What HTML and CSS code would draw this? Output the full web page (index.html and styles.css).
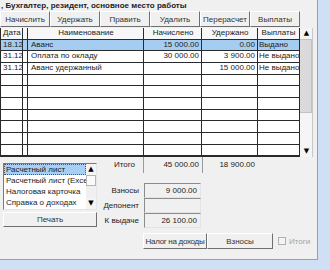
FILE: index.html
```html
<!DOCTYPE html>
<html lang="ru">

<head>
    <meta charset="UTF-8">
    <meta name="viewport" content="width=device-width, initial-scale=1.0">
    <title>Расчетный лист</title>
    <link rel="stylesheet" href="styles.css">
</head>

<body>
    <div class="window">
        <div class="caption">, Бухгалтер, резидент, основное место работы</div>

        <div class="toolbar">
            <button class="btn">Начислить</button>
            <button class="btn">Удержать</button>
            <button class="btn">Править</button>
            <button class="btn">Удалить</button>
            <button class="btn">Перерасчет</button>
            <button class="btn">Выплаты</button>
        </div>

        <div class="grid-wrap">
            <div class="grid">
                <div class="row head">
                    <div class="c c-date">Дата</div>
                    <div class="c"></div>
                    <div class="c c-center">Наименование</div>
                    <div class="c c-center">Начислено</div>
                    <div class="c c-center">Удержано</div>
                    <div class="c c-center">Выплаты</div>
                </div>
                <div class="row selected">
                    <div class="c">18.12</div>
                    <div class="c"></div>
                    <div class="c c-name">Аванс</div>
                    <div class="c c-num">15 000.00</div>
                    <div class="c c-num">0.00</div>
                    <div class="c">Выдано</div>
                </div>
                <div class="row">
                    <div class="c">31.12</div>
                    <div class="c"></div>
                    <div class="c c-name">Оплата по окладу</div>
                    <div class="c c-num">30 000.00</div>
                    <div class="c c-num">3 900.00</div>
                    <div class="c">Не выдано</div>
                </div>
                <div class="row">
                    <div class="c">31.12</div>
                    <div class="c"></div>
                    <div class="c c-name">Аванс удержанный</div>
                    <div class="c c-num"></div>
                    <div class="c c-num">15 000.00</div>
                    <div class="c">Не выдано</div>
                </div>
                <!-- empty rows -->
                <div class="row"><div class="c"></div><div class="c"></div><div class="c"></div><div class="c"></div><div class="c"></div><div class="c"></div></div>
                <div class="row"><div class="c"></div><div class="c"></div><div class="c"></div><div class="c"></div><div class="c"></div><div class="c"></div></div>
                <div class="row"><div class="c"></div><div class="c"></div><div class="c"></div><div class="c"></div><div class="c"></div><div class="c"></div></div>
                <div class="row"><div class="c"></div><div class="c"></div><div class="c"></div><div class="c"></div><div class="c"></div><div class="c"></div></div>
                <div class="row"><div class="c"></div><div class="c"></div><div class="c"></div><div class="c"></div><div class="c"></div><div class="c"></div></div>
                <div class="row"><div class="c"></div><div class="c"></div><div class="c"></div><div class="c"></div><div class="c"></div><div class="c"></div></div>
                <div class="row"><div class="c"></div><div class="c"></div><div class="c"></div><div class="c"></div><div class="c"></div><div class="c"></div></div>
            </div>
            <div class="vscroll">
                <div class="sb-btn">▲</div>
                <div class="sb-thumb"></div>
                <div class="sb-btn sb-last">▼</div>
            </div>
        </div>

        <div class="lower">
            <div class="left-col">
                <div class="listbox">
                    <ul class="list-items">
                        <li class="active">Расчетный лист</li>
                        <li>Расчетный лист (Excel)</li>
                        <li>Налоговая карточка</li>
                        <li>Справка о доходах</li>
                    </ul>
                    <div class="list-scroll">
                        <div class="ls-btn">▲</div>
                        <div class="ls-thumb"></div>
                        <div class="ls-track"></div>
                        <div class="ls-btn">▼</div>
                    </div>
                </div>
                <button class="btn print">Печать</button>
            </div>

            <div class="right-col">
                <div class="totals">
                    <div class="lbl total-lbl">Итого</div>
                    <div class="total-cell sum1">45 000.00</div>
                    <div class="total-cell sum2">18 900.00</div>
                </div>

                <div class="fields">
                    <div class="field-row">
                        <div class="lbl">Взносы</div>
                        <div class="field">9 000.00</div>
                    </div>
                    <div class="field-row">
                        <div class="lbl">Депонент</div>
                        <div class="field"></div>
                    </div>
                    <div class="field-row">
                        <div class="lbl">К выдаче</div>
                        <div class="field">26 100.00</div>
                    </div>
                </div>

                <div class="actions">
                    <button class="btn tax">Налог на доходы</button>
                    <button class="btn fees">Взносы</button>
                    <label class="check"><span class="box"></span>Итоги</label>
                </div>
            </div>
        </div>
    </div>
</body>

</html>
```

FILE: styles.css
```css
body {
    margin: 0;
    background: #cfe0f4;
    font-family: 'Liberation Sans', Arial, sans-serif;
    font-size: 8px;
    color: #1c1c1c;
}

.window {
    width: 318px;
    height: 260px;
    box-sizing: border-box;
    background: #f0f0f0;
    border-right: 1px solid #8ba3bf;
    border-bottom: 1px solid #8ba3bf;
    overflow: hidden;
}

.caption {
    height: 11px;
    line-height: 11px;
    font-weight: bold;
    white-space: nowrap;
    padding-left: 1px;
}

.toolbar {
    display: flex;
    height: 16px;
    margin-bottom: 1px;
}

.btn {
    width: 50px;
    height: 16px;
    padding: 0;
    border: 1px solid;
    border-color: #ffffff #6f6f6f #6f6f6f #ffffff;
    background: #f0f0f0;
    font: inherit;
    color: #333;
    white-space: nowrap;
    overflow: hidden;
}

/* grid */
.grid-wrap {
    display: flex;
    align-items: stretch;
}

.grid {
    width: 300px;
    flex-shrink: 0;
    box-sizing: border-box;
    border-left: 1px solid #2a2a2a;
    border-bottom: 1px solid #2a2a2a;
    background: #fff;
}

.row {
    display: grid;
    grid-template-columns: 22px 5px 116px 58px 56px 42px;
    height: 11.67px;
    box-sizing: border-box;
    border-bottom: 1px solid #2a2a2a;
}

.row.head {
    height: 11.7px;
    background: #f7f7f7;
}

.row.selected {
    background: #a5cdf2;
}

.c {
    border-right: 1px solid #2a2a2a;
    line-height: 10px;
    padding: 0 1px 0 2px;
    white-space: nowrap;
    overflow: hidden;
}

.c:last-child {
    padding-left: 1px;
}

.c-center {
    text-align: center;
}

.c-name {
    padding-left: 3px;
}

.c-num {
    text-align: right;
    padding-right: 2px;
}

.vscroll {
    width: 12px;
    flex-shrink: 0;
    display: flex;
    flex-direction: column;
    background: #f5f5f5;
    border-right: 1px solid #c8c8c8;
}

.sb-btn,
.ls-btn {
    height: 11px;
    flex-shrink: 0;
    text-align: center;
    font-family: 'DejaVu Sans', sans-serif;
    font-size: 7px;
    line-height: 11px;
    color: #000;
    background: #f4f4f4;
}

.sb-btn {
    padding-left: 1px;
}

.sb-last {
    margin-top: auto;
}

.sb-thumb {
    height: 74px;
    flex-shrink: 0;
    box-sizing: border-box;
    background: #dadada;
    border: 1px solid #c2c2c2;
    border-left: 0;
}

/* lower part */
.lower {
    display: flex;
}

.left-col {
    width: 94px;
    margin-left: 3px;
    padding-top: 6px;
}

.listbox {
    display: flex;
    height: 47px;
    box-sizing: border-box;
    border: 1px solid;
    border-color: #7a7a7a #e6e6e6 #e6e6e6 #7a7a7a;
    background: #fff;
}

.list-items {
    flex: 1;
    margin: 0;
    padding: 0;
    list-style: none;
    overflow: hidden;
}

.list-items li {
    height: 11px;
    line-height: 11px;
    padding-left: 2px;
    white-space: nowrap;
    box-sizing: border-box;
}

.list-items li.active {
    background: #a8cff3;
    outline: 1px dotted #555;
    outline-offset: -1px;
}

.list-scroll {
    width: 10px;
    flex-shrink: 0;
    display: flex;
    flex-direction: column;
    background: #f0f0f0;
}

.ls-thumb {
    height: 11px;
    flex-shrink: 0;
    box-sizing: border-box;
    border: 1px solid #b5b5b5;
    background: #fafafa;
}

.ls-track {
    flex: 1;
}

.print {
    width: 94px;
    height: 15px;
    margin-top: 2px;
}

.right-col {
    margin-left: 3px;
}

.totals {
    display: flex;
    height: 16px;
}

.lbl {
    width: 44px;
    box-sizing: border-box;
    text-align: right;
    padding-right: 5px;
    white-space: nowrap;
}

.total-lbl {
    width: 43px;
    padding-right: 8px;
    line-height: 16px;
}

.total-cell {
    box-sizing: border-box;
    border-left: 1px solid #9a9a9a;
    text-align: right;
    padding-right: 3px;
    line-height: 15px;
}

.sum1 {
    width: 59px;
}

.sum2 {
    width: 56px;
}

.fields {
    margin-top: 10px;
}

.field-row {
    display: flex;
    height: 15px;
    line-height: 15px;
}

.field {
    width: 57px;
    height: 15px;
    box-sizing: border-box;
    border: 1px solid;
    border-color: #8c8c8c #e4e4e4 #e4e4e4 #8c8c8c;
    text-align: right;
    padding-right: 3px;
    line-height: 13px;
}

.actions {
    display: flex;
    align-items: center;
    margin-top: 5px;
    padding-left: 43px;
}

.tax {
    width: 64px;
    letter-spacing: -0.3px;
}

.fees {
    width: 66px;
}

.check {
    display: flex;
    align-items: center;
    margin-left: 5px;
    color: #a3a3a3;
}

.box {
    width: 8px;
    height: 8px;
    box-sizing: border-box;
    border: 1px solid #b0b0b0;
    background: #f4f4f4;
    margin-right: 3px;
}
```
